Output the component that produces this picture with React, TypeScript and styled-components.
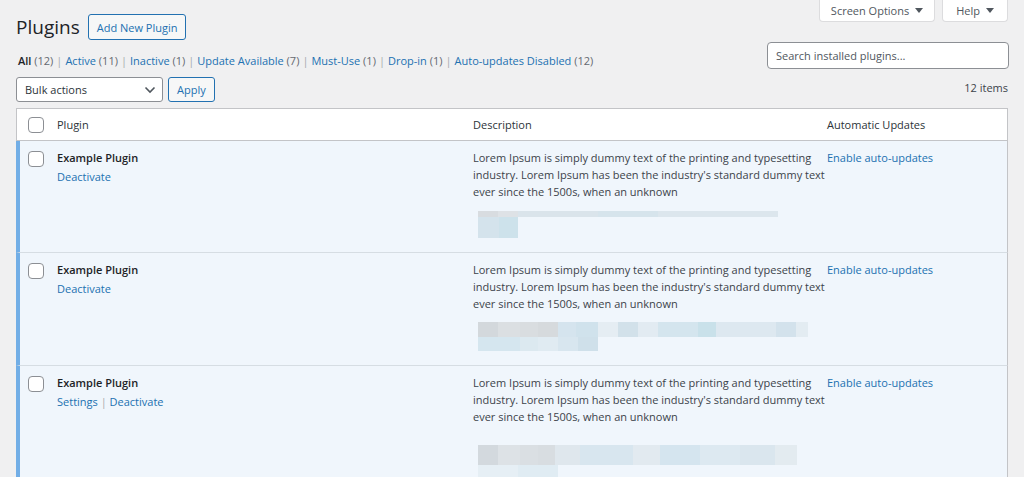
import styled, { createGlobalStyle } from 'styled-components';

const GlobalStyle = createGlobalStyle`
  html, body {
    margin: 0;
    padding: 0;
    background: #f0f0f1;
  }
  body {
    font-family: "Open Sans", "Noto Sans", sans-serif;
    font-size: 11px;
    color: #3c434a;
    overflow: hidden;
  }
`;

const Page = styled.div`
  padding: 0 16px;
`;

const Header = styled.div`
  display: grid;
  grid-template-columns: 1fr auto;
  grid-template-rows: 42px 28px 38px;
`;

const TitleRow = styled.div`
  display: flex;
  align-items: center;
  gap: 8px;
  padding-top: 14px;
  height: 26px;
`;

const Title = styled.h1`
  margin: 0;
  font-size: 19px;
  font-weight: 400;
  color: #1d2327;
  line-height: 26px;
`;

const OutlineButton = styled.button<{ $h?: number }>`
  height: ${(p) => p.$h ?? 26}px;
  padding: 0 8px;
  border: 1px solid #2271b1;
  border-radius: 3px;
  background: #f6f7f7;
  color: #2271b1;
  font-family: inherit;
  font-size: 11px;
  line-height: 1;
  cursor: pointer;
`;

const Tabs = styled.div`
  display: flex;
  gap: 7px;
  align-self: start;
  justify-self: end;
`;

const Tab = styled.button<{ $pad: number }>`
  display: flex;
  align-items: center;
  gap: 6px;
  height: 22px;
  padding: 0 ${(p) => p.$pad}px;
  background: #fff;
  border: 1px solid #dcdcde;
  border-top: none;
  border-radius: 0 0 4px 4px;
  color: #50575e;
  font-family: inherit;
  font-size: 11px;
  cursor: pointer;
`;

const Filters = styled.ul`
  align-self: end;
  display: flex;
  margin: 0 0 0 2px;
  padding: 0;
  list-style: none;
  line-height: 18px;
  color: #646970;
`;

const FilterItem = styled.li`
  white-space: pre;
`;

const FilterLink = styled.a<{ $current?: boolean }>`
  color: ${(p) => (p.$current ? '#1d2327' : '#2271b1')};
  font-weight: ${(p) => (p.$current ? 600 : 400)};
  text-decoration: none;
`;

const Sep = styled.span`
  color: #a7aaad;
  margin: 0 3px;
`;

const Search = styled.input`
  align-self: start;
  box-sizing: border-box;
  width: 242px;
  height: 27px;
  margin-right: -1px;
  padding: 0 8px;
  border: 1px solid #8c8f94;
  border-radius: 4px;
  background: #fff;
  font-family: inherit;
  font-size: 11px;
  color: #2c3338;
  &::placeholder {
    color: #50575e;
  }
`;

const BulkRow = styled.div`
  display: flex;
  gap: 5px;
  padding-top: 7px;
`;

const Select = styled.div`
  box-sizing: border-box;
  width: 147px;
  height: 25px;
  display: flex;
  align-items: center;
  justify-content: space-between;
  padding: 0 6px 0 8px;
  background: #fff;
  border: 1px solid #8c8f94;
  border-radius: 3px;
  color: #2c3338;
`;

const Count = styled.div`
  justify-self: end;
  padding-top: 9px;
  line-height: 18px;
  color: #3c434a;
`;

const Table = styled.div`
  border-top: 1px solid #c3c4c7;
`;

const Row = styled.div<{ $active?: boolean }>`
  display: grid;
  grid-template-columns: ${(p) => (p.$active ? 37 : 40)}px 416px 354px 1fr;
  border-left: ${(p) => (p.$active ? '4px solid #72aee6' : '1px solid #c3c4c7')};
  border-right: 1px solid #c3c4c7;
  border-bottom: 1px solid ${(p) => (p.$active ? '#d6dde3' : '#c3c4c7')};
  background: ${(p) => (p.$active ? '#f0f6fc' : '#fff')};
`;

const HeadRow = styled(Row)`
  height: 31px;
  align-items: center;
  color: #2c3338;
`;

const CheckCell = styled.div<{ $active?: boolean }>`
  padding-left: ${(p) => (p.$active ? 8 : 11)}px;
  padding-top: ${(p) => (p.$active ? 10 : 0)}px;
  display: flex;
`;

const Checkbox = styled.span`
  box-sizing: border-box;
  width: 16px;
  height: 16px;
  border: 1px solid #8c8f94;
  border-radius: 4px;
  background: #fff;
`;

const Cell = styled.div`
  padding-top: 8px;
  line-height: 17px;
`;

const Name = styled.div`
  font-weight: 600;
  color: #1d2327;
  line-height: 18px;
`;

const Actions = styled.div`
  margin-top: 1px;
  color: #a7aaad;
  line-height: 18px;
`;

const Link = styled.a`
  color: #2271b1;
  text-decoration: none;
`;

const Desc = styled.div`
  white-space: nowrap;
  color: #3c434a;
`;

const Blur = styled.div<{ $gap: number }>`
  margin: ${(p) => p.$gap}px 0 14px 5px;
`;

const BlurLine = styled.div<{ $h: number }>`
  display: flex;
  height: ${(p) => p.$h}px;
`;

const Chunk = styled.div`
  height: 100%;
`;

type Seg = [number, string];
type BlurSpec = { gap: number; lines: { h: number; segs: Seg[] }[] };

const Caret = () => (
  <svg width="8" height="5" viewBox="0 0 8 5">
    <path d="M0 0h8L4 5z" fill="#50575e" />
  </svg>
);

const Chevron = () => (
  <svg width="12" height="8" viewBox="0 0 12 8">
    <path d="M1.5 1.5 6 6l4.5-4.5" fill="none" stroke="#50575e" strokeWidth="1.6" />
  </svg>
);

const filters = [
  { label: 'All', count: 12, current: true },
  { label: 'Active', count: 11 },
  { label: 'Inactive', count: 1 },
  { label: 'Update Available', count: 7 },
  { label: 'Must-Use', count: 1 },
  { label: 'Drop-in', count: 1 },
  { label: 'Auto-updates Disabled', count: 12 },
];

const blurs: BlurSpec[] = [
  {
    gap: 11,
    lines: [
      {
        h: 6,
        segs: [
          [20, '#d8dce0'],
          [20, '#dee2e6'],
          [80, '#dae4eb'],
          [60, '#d6e4ec'],
          [120, '#dce6ed'],
        ],
      },
      {
        h: 21,
        segs: [
          [21, '#d4e3ec'],
          [19, '#cde2eb'],
        ],
      },
    ],
  },
  {
    gap: 10,
    lines: [
      {
        h: 15,
        segs: [
          [20, '#d3d8dc'],
          [22, '#dbdfe2'],
          [18, '#d9dde0'],
          [20, '#d6dadd'],
          [18, '#d5e4ee'],
          [22, '#d0e2ec'],
          [20, '#e5edf3'],
          [20, '#d2e1ea'],
          [20, '#e2ebf2'],
          [40, '#d4e5ee'],
          [18, '#c9e1ea'],
          [60, '#dde8f0'],
          [20, '#d3e2ec'],
          [12, '#e3ecf2'],
        ],
      },
      {
        h: 14,
        segs: [
          [42, '#d5e6ef'],
          [18, '#dce9f0'],
          [20, '#e0ebf2'],
          [20, '#d8e6ef'],
          [20, '#cfe0ea'],
        ],
      },
    ],
  },
  {
    gap: 20,
    lines: [
      {
        h: 20,
        segs: [
          [20, '#d3d9de'],
          [22, '#dde2e6'],
          [18, '#dadfe3'],
          [17, '#d8dde1'],
          [25, '#dfe7ed'],
          [53, '#d8e6ef'],
          [27, '#e2eaf0'],
          [40, '#d5e5ef'],
          [40, '#dde9f1'],
          [35, '#dae6ee'],
          [22, '#e3ebf0'],
        ],
      },
      {
        h: 20,
        segs: [
          [40, '#e6eff5'],
          [40, '#e0ecf3'],
        ],
      },
    ],
  },
];

const plugins = [
  { name: 'Example Plugin', settings: false },
  { name: 'Example Plugin', settings: false },
  { name: 'Example Plugin', settings: true },
];

export default function App() {
  return (
    <Page>
      <GlobalStyle />
      <Header>
        <TitleRow>
          <Title>Plugins</Title>
          <OutlineButton>Add New Plugin</OutlineButton>
        </TitleRow>
        <Tabs>
          <Tab $pad={11}>
            Screen Options <Caret />
          </Tab>
          <Tab $pad={13}>
            Help <Caret />
          </Tab>
        </Tabs>
        <Filters>
          {filters.map((f, i) => (
            <FilterItem key={f.label}>
              <FilterLink $current={f.current}>{f.label}</FilterLink> ({f.count})
              {i < filters.length - 1 && <Sep>|</Sep>}
            </FilterItem>
          ))}
        </Filters>
        <Search placeholder="Search installed plugins..." />
        <BulkRow>
          <Select>
            Bulk actions <Chevron />
          </Select>
          <OutlineButton $h={25}>Apply</OutlineButton>
        </BulkRow>
        <Count>12 items</Count>
      </Header>
      <Table>
        <HeadRow>
          <CheckCell>
            <Checkbox />
          </CheckCell>
          <div>Plugin</div>
          <div>Description</div>
          <div>Automatic Updates</div>
        </HeadRow>
        {plugins.map((p, i) => (
          <Row $active key={i}>
            <CheckCell $active>
              <Checkbox />
            </CheckCell>
            <Cell>
              <Name>{p.name}</Name>
              <Actions>
                {p.settings && (
                  <>
                    <Link>Settings</Link> |{' '}
                  </>
                )}
                <Link>Deactivate</Link>
              </Actions>
            </Cell>
            <Cell>
              <Desc>
                Lorem Ipsum is simply dummy text of the printing and typesetting
                <br />
                industry. Lorem Ipsum has been the industry's standard dummy text
                <br />
                ever since the 1500s, when an unknown
              </Desc>
              <Blur $gap={blurs[i].gap}>
                {blurs[i].lines.map((l, j) => (
                  <BlurLine $h={l.h} key={j}>
                    {l.segs.map(([w, c], k) => (
                      <Chunk key={k} style={{ width: w, background: c }} />
                    ))}
                  </BlurLine>
                ))}
              </Blur>
            </Cell>
            <Cell>
              <Link>Enable auto-updates</Link>
            </Cell>
          </Row>
        ))}
      </Table>
    </Page>
  );
}
